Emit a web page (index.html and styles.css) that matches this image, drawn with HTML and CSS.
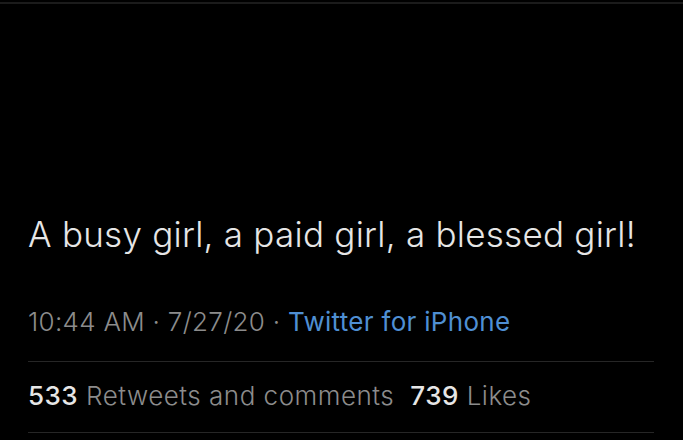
FILE: index.html
```
<!DOCTYPE html>
<html>
<head>
<meta charset="utf-8">
<link rel="stylesheet" href="styles.css">
</head>
<body>
<div class="topline"></div>
<main class="tweet">
  <p class="text">A busy girl, a paid girl, a blessed girl!</p>
  <div class="meta"><span>10:44 AM · 7/27/20 · </span><span class="source">Twitter for iPhone</span></div>
  <div class="stats">
    <span class="stat"><b>533</b> Retweets and comments</span>
    <span class="stat"><b>739</b> Likes</span>
  </div>
</main>
</body>
</html>
```
FILE: styles.css
```
html, body {
  margin: 0;
  padding: 0;
  background: #000;
  width: 683px;
  height: 440px;
  overflow: hidden;
}
body {
  font-family: Inter, "Noto Sans", sans-serif;
}
.topline {
  margin-top: 2px;
  height: 2px;
  background: #1b1b1b;
}
.tweet {
  padding: 0 29px 0 28px;
}
.text {
  margin: 0;
  padding-top: 209px;
  font-size: 35px;
  line-height: 42px;
  font-weight: 300;
  color: #e6e6e6;
  letter-spacing: 0.25px;
}
.meta {
  margin-top: 51px;
  font-size: 26px;
  line-height: 32px;
  font-weight: 300;
  color: #8c8c8c;
  letter-spacing: 0.3px;
}
.source {
  color: #4f8fd3;
  font-weight: 400;
}
.stats {
  margin-top: 23px;
  border-top: 1px solid #262626;
  border-bottom: 1px solid #262626;
  height: 70px;
  box-sizing: content-box;
  display: flex;
  align-items: flex-start;
  gap: 16px;
  font-size: 26px;
  line-height: 32px;
  font-weight: 300;
  color: #8c8c8c;
  letter-spacing: 0.5px;
}
.stat {
  margin-top: 18px;
}
.stat b {
  font-weight: 500;
  color: #e6e6e6;
}
```
